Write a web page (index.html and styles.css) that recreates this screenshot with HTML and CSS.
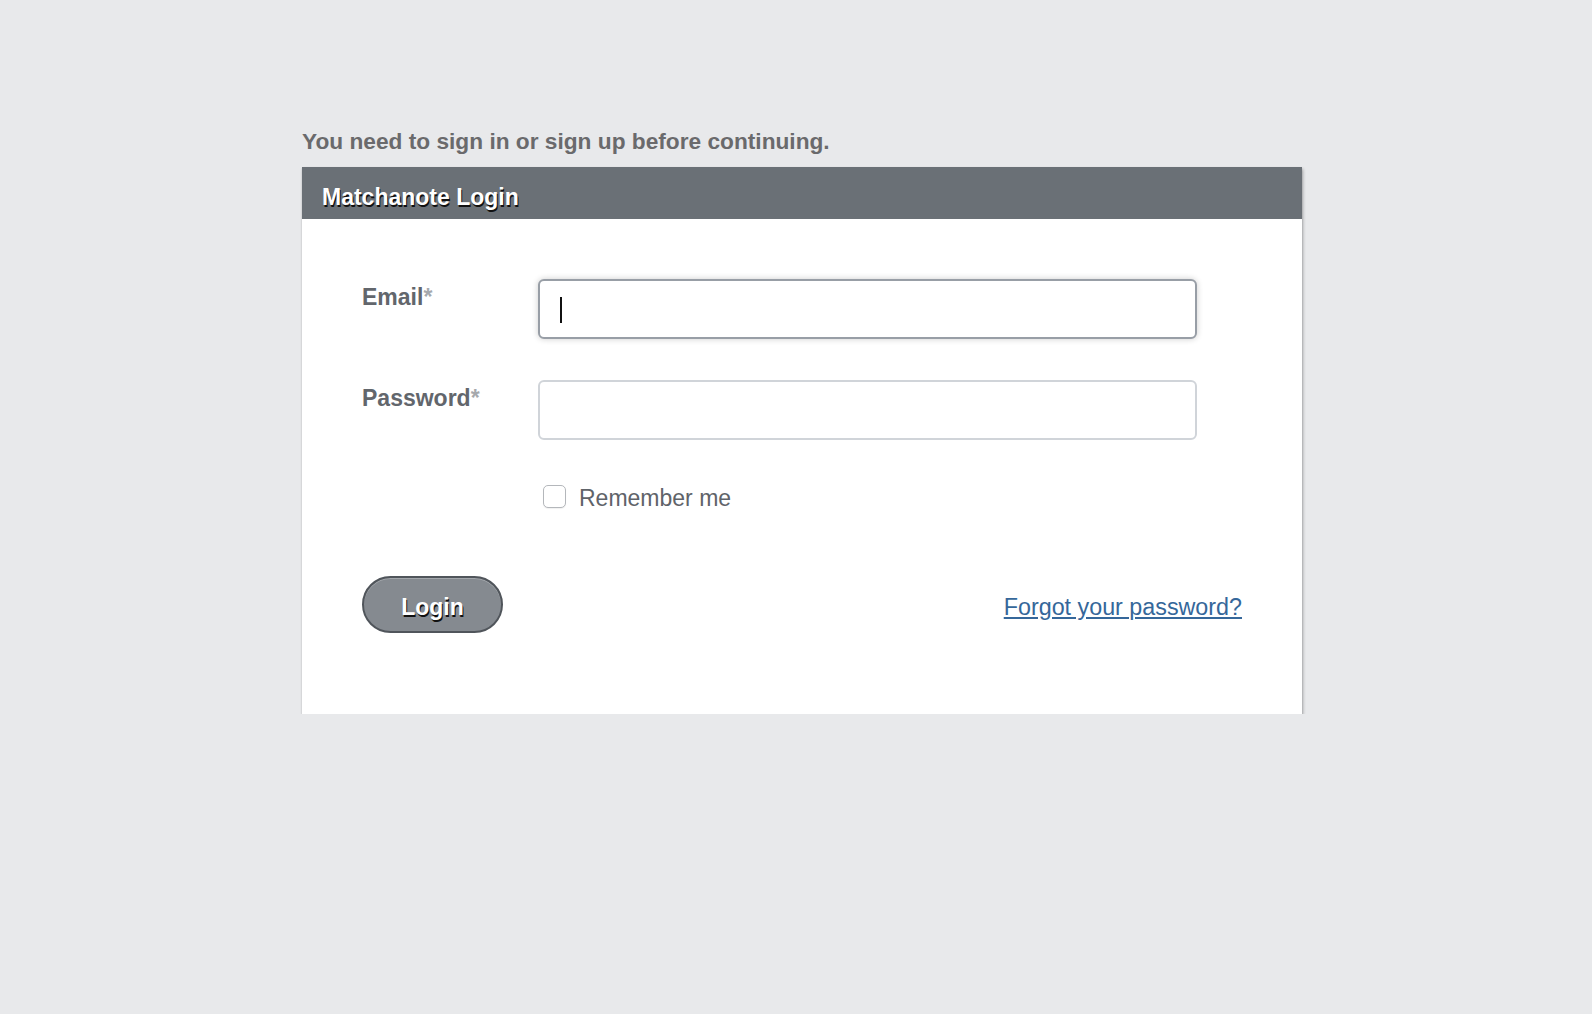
FILE: index.html
```html
<!DOCTYPE html>
<html lang="en">
<head>
<meta charset="utf-8">
<title>Matchanote Login</title>
<link rel="stylesheet" href="styles.css">
</head>
<body>
<div class="wrap">
  <p class="notice">You need to sign in or sign up before continuing.</p>
  <div class="panel">
    <div class="panel-head">Matchanote Login</div>
    <form class="panel-body">
      <div class="row">
        <label class="label" for="email">Email<span class="req">*</span></label>
        <div class="field focused">
          <input class="input input-focus" id="email" type="email">
        </div>
      </div>
      <div class="row row-pw">
        <label class="label" for="pw">Password<span class="req">*</span></label>
        <div class="field">
          <input class="input" id="pw" type="password">
        </div>
      </div>
      <div class="remember">
        <input class="check" type="checkbox" id="rem">
        <label for="rem" class="remember-text">Remember me</label>
      </div>
      <div class="actions">
        <button type="button" class="btn">Login</button>
        <a class="forgot" href="#">Forgot your password?</a>
      </div>
    </form>
  </div>
</div>
</body>
</html>
```
FILE: styles.css
```css
html, body {
  margin: 0;
  padding: 0;
}
body {
  background: #e8e9eb;
  font-family: "Liberation Sans", Arial, Helvetica, sans-serif;
  color: #62666c;
}
.wrap {
  width: 1000px;
  padding: 128px 0 0 302px;
}
.notice {
  margin: 0 0 13px 0;
  font-size: 22.7px;
  line-height: 26px;
  font-weight: bold;
  color: #6a6a6c;
}
.panel {
  background: #fff;
  box-shadow: 1px 2px 3px rgba(0, 0, 0, 0.3), 0 1px 1px rgba(0, 0, 0, 0.15);
}
.panel-head {
  background: #6a7076;
  color: #fff;
  font-size: 23px;
  line-height: 26px;
  font-weight: bold;
  padding: 17px 20px 9px 20px;
  text-shadow: 1px 1.5px 0 #111;
}
.panel-body {
  margin: 0;
  padding: 60px 60px 81px 60px;
}
.row {
  display: flex;
  align-items: flex-start;
}
.row-pw {
  margin-top: 41px;
}
.label {
  width: 176px;
  flex: none;
  padding-top: 4px;
  font-size: 23px;
  line-height: 28px;
  font-weight: bold;
  color: #62666c;
}
.req {
  color: #a6a9ad;
}
.field {
  position: relative;
  width: 659px;
}
.input {
  display: block;
  box-sizing: border-box;
  width: 659px;
  height: 60px;
  margin: 0;
  border: 2px solid #d0d4d9;
  border-radius: 6px;
  background: #fff;
  outline: none;
  font-size: 22px;
  padding: 0 20px;
}
.input-focus {
  border-color: #989ea6;
  box-shadow: 0 0 6px rgba(0, 0, 0, 0.2);
  caret-color: transparent;
}
.focused::after {
  content: "";
  position: absolute;
  left: 22px;
  top: 18px;
  width: 2px;
  height: 26px;
  background: #111;
}
.remember {
  display: flex;
  align-items: flex-start;
  margin: 45px 0 0 181px;
}
.check {
  appearance: none;
  -webkit-appearance: none;
  box-sizing: border-box;
  width: 23px;
  height: 23px;
  margin: 0 13px 0 0;
  border: 1.5px solid #b4b7bb;
  border-radius: 5px;
  background: #fff;
  box-shadow: 0 1px 1px rgba(0, 0, 0, 0.06);
}
.remember-text {
  font-size: 23px;
  line-height: 26px;
  color: #5f6369;
}
.actions {
  display: flex;
  justify-content: space-between;
  align-items: baseline;
  margin-top: 65px;
}
.btn {
  box-sizing: border-box;
  width: 141px;
  height: 57px;
  padding: 16px 0 11px;
  border: 2px solid #50555b;
  border-radius: 30px;
  background: #858a90;
  box-shadow: inset 0 1px 0 rgba(255, 255, 255, 0.25);
  color: #fff;
  font-family: "Liberation Sans", Arial, Helvetica, sans-serif;
  font-size: 23px;
  line-height: 26px;
  font-weight: bold;
  text-shadow: 1px 1.5px 0 #111;
  cursor: pointer;
}
.forgot {
  font-size: 23.3px;
  line-height: 26px;
  color: #35679a;
  text-decoration: underline;
}
```
